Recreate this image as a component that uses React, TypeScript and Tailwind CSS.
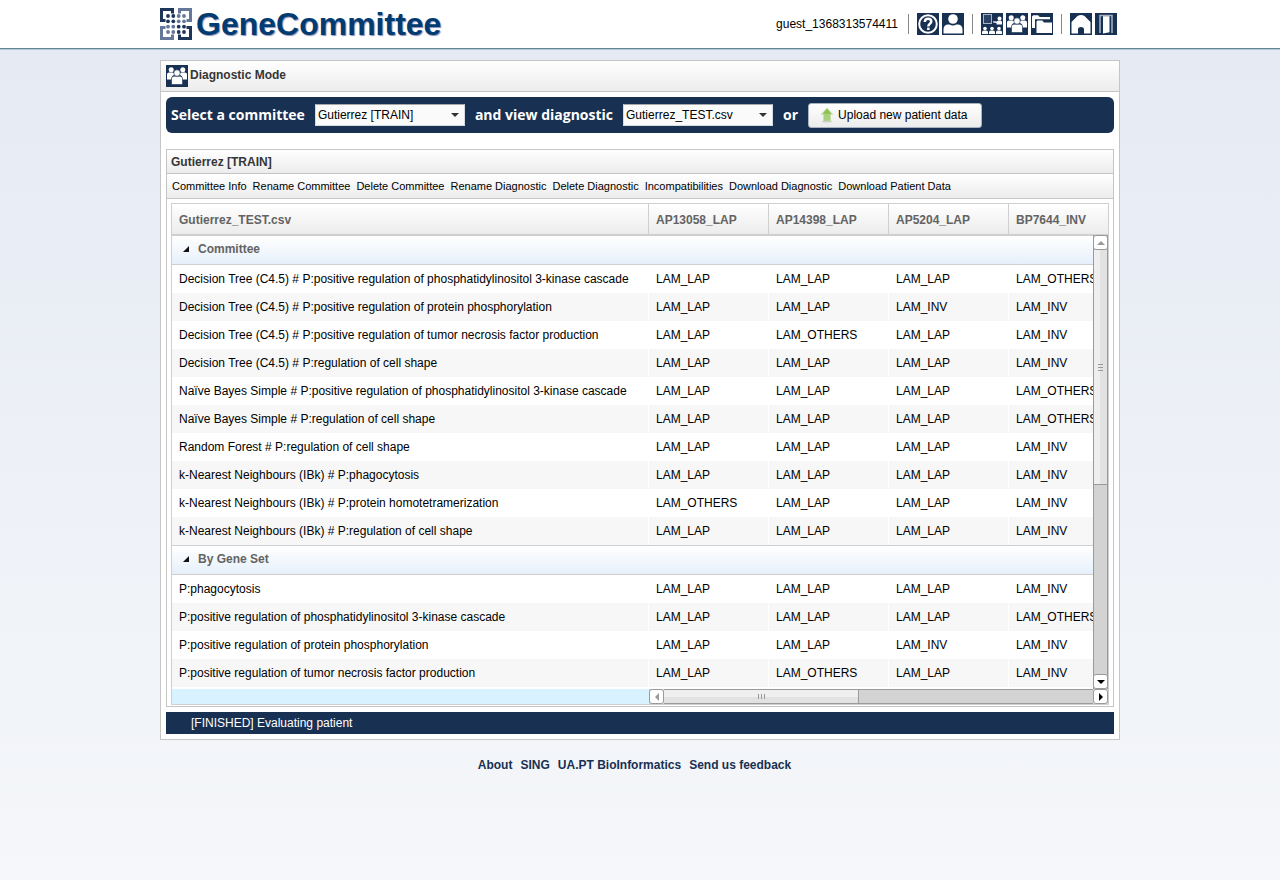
import React, { useState } from "react";

const NAVY = "#183052";

function IconBox({ children }: { children: React.ReactNode }) {
  return (
    <svg viewBox="0 0 22 22" className="block size-[22px]" aria-hidden="true">
      <rect width="22" height="22" fill={NAVY} />
      {children}
    </svg>
  );
}

const HelpIcon = () => (
  <IconBox>
    <circle cx="11" cy="11" r="8.8" fill="none" stroke="#fff" strokeWidth="2" />
    <path d="M7.8 9c0-2.2 1.4-3.2 3.3-3.2s3.200 1.100 3.200 2.700c0 2.300-3 2.300-3 4.900" fill="none" stroke="#fff" strokeWidth="2.400" />
    <rect x="10.100" y="14.600" width="2.500" height="2.400" fill="#fff" />
  </IconBox>
);

const UserIcon = () => (
  <IconBox>
    <circle cx="11" cy="6" r="4.800" fill="#fff" />
    <path d="M1.500 20.500v-4.300c0-3 2-4.700 4.800-4.700h1.200c2 1.300 5 1.300 7 0h1.200c2.800 0 4.800 1.700 4.800 4.700v4.300z" fill="#fff" />
  </IconBox>
);

const ClassIcon = () => (
  <IconBox>
    <rect x="2.500" y="1.500" width="8" height="9" fill="#2b4262" stroke="#aab4c2" />
    <circle cx="18.500" cy="5.500" r="2" fill="#fff" />
    <path d="M21 11.500h-5.500V10l-3.300-.6V8.300l3.800.2 1-.9h2c1.200 0 2 .7 2 1.500z" fill="#fff" />
    {[4, 11, 18].map((x) => (
      <g key={x} fill="#fff">
        <circle cx={x} cy="15.500" r="1.800" />
        <path d={`M${x - 3} 21v-1.600c0-1.300.7-2 1.800-2h2.400c1.100 0 1.800.7 1.800 2V21z`} />
      </g>
    ))}
  </IconBox>
);

const GroupIcon = () => (
  <IconBox>
    <g fill="#fff">
      <circle cx="5.200" cy="4.800" r="2.500" />
      <circle cx="16.800" cy="4.800" r="2.500" />
      <path d="M1 14.500V9.800C1 8.300 1.900 7.600 3 7.600h4l2 1.700-3 2-.5 3.200zM21 14.500V9.800c0-1.500-.9-2.200-2-2.200h-4l-2 1.700 3 2 .5 3.200z" />
      <path d="M5.500 19.500V14c0-1.900 1-2.800 2.700-2.800h5.600c1.700 0 2.700.9 2.700 2.800v5.500z" stroke={NAVY} strokeWidth=".6" />
      <circle cx="11" cy="8" r="3.200" stroke={NAVY} strokeWidth=".6" />
    </g>
  </IconBox>
);

const FolderIcon = () => (
  <IconBox>
    <path d="M1 15V3.500L2.200 2.200h5L8.700 4H19v2.300H4V15z" fill="#fff" />
    <path d="M5.500 8.500 6.500 7.500h4.800L13 9.500h8V20H5.500z" fill="#fff" />
  </IconBox>
);

const HomeIcon = () => (
  <IconBox>
    <path d="M1.500 20.500V9L7.500 3Q11 .8 14.500 3l6 6v11.500H14v-4.300c0-3-6-3-6 0v4.300z" fill="#fff" />
  </IconBox>
);

const ExitIcon = () => (
  <IconBox>
    <path d="M5 20V2.500h12V20" fill="none" stroke="#a4afbf" strokeWidth="1.600" />
    <path d="M8 3.300h6.500v16L8 20.500z" fill="#fff" />
  </IconBox>
);

const DARK = "#1d3558";
const PALE = "#66789a";

const Logo = () => (
  <svg viewBox="0 0 32 32" className="size-8 shrink-0" aria-hidden="true">
    <g fill="none" strokeWidth="3">
      <path d="M12.500 5.500v-4h-11v11h4" stroke={DARK} />
      <path d="M19.500 5.500v-4h11v11h-4" stroke={PALE} />
      <path d="M12.500 26.500v4h-11v-11h4" stroke={PALE} />
      <path d="M19.500 26.500v4h11v-11h-4" stroke={DARK} />
    </g>
    {[8, 13.3, 18.700, 24].map((y, r) =>
      [8, 13.3, 18.700, 24].map((x, c) => (
        <circle key={`${x}-${y}`} cx={x} cy={y} r="1.900" fill={(r < 2) === (c < 2) ? DARK : PALE} />
      )),
    )}
  </svg>
);

const Divider = () => <span className="h-5 w-px bg-[#888888]" />;

function IconLink({ label, children }: { label: string; children: React.ReactNode }) {
  return (
    <a href="#" aria-label={label} className="block">
      {children}
    </a>
  );
}

function Picker({ label, options }: { label: string; options: string[] }) {
  return (
    <label className="flex items-center gap-[10px]">
      <span>{label}</span>
      <span className="relative block">
        <select className="block h-[22px] w-[150px] appearance-none border border-[#d5dbe4] border-t-[#a8a8a8] bg-[#fafafa] px-[2px] font-['Liberation_Sans',sans-serif] text-xs font-normal text-black">
          {options.map((o) => (
            <option key={o}>{o}</option>
          ))}
        </select>
        <svg viewBox="0 0 8 4" className="pointer-events-none absolute top-[9px] right-[6px] h-1 w-2" aria-hidden="true">
          <path d="M0 0h8L4 4z" fill="#333" />
        </svg>
      </span>
    </label>
  );
}

const patients = ["AP13058_LAP", "AP14398_LAP", "AP5204_LAP", "BP7644_INV"];

const L = "LAM_LAP";
const I = "LAM_INV";
const O = "LAM_OTHERS";

const groups = [
  {
    name: "Committee",
    rows: [
      ["Decision Tree (C4.5) # P:positive regulation of phosphatidylinositol 3-kinase cascade", L, L, L, O],
      ["Decision Tree (C4.5) # P:positive regulation of protein phosphorylation", L, L, I, I],
      ["Decision Tree (C4.5) # P:positive regulation of tumor necrosis factor production", L, O, L, I],
      ["Decision Tree (C4.5) # P:regulation of cell shape", L, L, L, I],
      ["Naïve Bayes Simple # P:positive regulation of phosphatidylinositol 3-kinase cascade", L, L, L, O],
      ["Naïve Bayes Simple # P:regulation of cell shape", L, L, L, O],
      ["Random Forest # P:regulation of cell shape", L, L, L, I],
      ["k-Nearest Neighbours (IBk) # P:phagocytosis", L, L, L, I],
      ["k-Nearest Neighbours (IBk) # P:protein homotetramerization", O, L, L, I],
      ["k-Nearest Neighbours (IBk) # P:regulation of cell shape", L, L, L, I],
    ],
  },
  {
    name: "By Gene Set",
    rows: [
      ["P:phagocytosis", L, L, L, I],
      ["P:positive regulation of phosphatidylinositol 3-kinase cascade", L, L, L, O],
      ["P:positive regulation of protein phosphorylation", L, L, I, I],
      ["P:positive regulation of tumor necrosis factor production", L, O, L, I],
    ],
  },
];

function Group({ name, rows, first }: { name: string; rows: string[][]; first: boolean }) {
  const [open, setOpen] = useState(true);
  return (
    <tbody>
      <tr>
        <th
          colSpan={5}
          className={`border-b border-[#cfcfcf] bg-linear-to-b from-white to-[#e6f0fa] px-0 pt-0 pb-[2px] text-left ${first ? "h-[29px]" : "h-[30px] border-t"}`}
        >
          <button
            type="button"
            aria-expanded={open}
            onClick={() => setOpen(!open)}
            className="flex h-6 items-center gap-[9px] pl-[11px] font-bold text-[#636363]"
          >
            <svg viewBox="0 0 6 6" className="size-[6px]" aria-hidden="true">
              <path d="M6 0v6H0z" fill="#111" />
            </svg>
            {name}
          </button>
        </th>
      </tr>
      {open &&
        rows.map((row, i) => (
          <tr key={row[0]} className={i % 2 ? "bg-[#f7f7f7]" : "bg-white"}>
            {row.map((cell, c) => (
              <td key={c} className="h-7 border-r border-white py-0 pr-0 pl-[7px] whitespace-nowrap">
                {cell}
              </td>
            ))}
          </tr>
        ))}
    </tbody>
  );
}

function Arrow({ label, d, muted }: { label: string; d: string; muted?: boolean }) {
  return (
    <button
      type="button"
      aria-label={label}
      className="flex size-[15px] shrink-0 items-center justify-center rounded-[3px] border border-[#9a9a9a] bg-white"
    >
      <svg viewBox="0 0 8 8" className="size-2" aria-hidden="true">
        <path d={d} fill={muted ? "#999" : "#000"} />
      </svg>
    </button>
  );
}

const actions = [
  "Committee Info",
  "Rename Committee",
  "Delete Committee",
  "Rename Diagnostic",
  "Delete Diagnostic",
  "Incompatibilities",
  "Download Diagnostic",
  "Download Patient Data",
];

export default function App() {
  return (
    <div className="min-h-screen bg-linear-to-b from-[#e5e9f3] to-[#f5f7fa] font-['Liberation_Sans',sans-serif] text-xs text-black">
      <header className="border-b border-[#5f8495] bg-white shadow-[0_1px_0_#b4cbd6]">
        <div className="mx-auto flex h-12 max-w-[960px] items-center justify-between pr-[3px]">
          <a href="#" className="flex items-center gap-1 text-[32px] leading-8 font-bold text-[#003b71] [text-shadow:1px_1px_1px_#8f8fb8]">
            <Logo />
            GeneCommittee
          </a>
          <nav className="flex items-center">
            <span>guest_1368313574411</span>
            <div className="flex items-center gap-2 pl-[10px]">
              <Divider />
              <div className="flex gap-[3px]">
                <IconLink label="Help"><HelpIcon /></IconLink>
                <IconLink label="Profile"><UserIcon /></IconLink>
              </div>
              <Divider />
              <div className="flex gap-[3px]">
                <IconLink label="Classifiers"><ClassIcon /></IconLink>
                <IconLink label="Diagnostic"><GroupIcon /></IconLink>
                <IconLink label="Data"><FolderIcon /></IconLink>
              </div>
              <Divider />
              <div className="flex gap-[3px]">
                <IconLink label="Home"><HomeIcon /></IconLink>
                <IconLink label="Log out"><ExitIcon /></IconLink>
              </div>
            </div>
          </nav>
        </div>
      </header>

      <main className="mx-auto mt-[11px] max-w-[960px] border border-[#c5c5c5] bg-white">
        <h1 className="flex h-[31px] items-center gap-[2px] border-b border-[#c5c5c5] bg-linear-to-b from-white to-[#ececec] px-[5px] font-bold text-[#363636]">
          <GroupIcon />
          <span className="pb-[2px]">Diagnostic Mode</span>
        </h1>

        <div className="p-[5px]">
          <form className="flex h-9 items-center gap-[10px] rounded-md bg-[#183052] px-[5px] font-['Open_Sans',sans-serif] text-sm font-bold text-white">
            <Picker label="Select a committee" options={["Gutierrez [TRAIN]"]} />
            <Picker label="and view diagnostic" options={["Gutierrez_TEST.csv"]} />
            <span>or</span>
            <button
              type="button"
              className="flex h-[25px] w-[174px] items-center gap-1 rounded-[3px] border border-[#a9b3c0] bg-linear-to-b from-white to-[#ececec] pl-[11px] font-['Liberation_Sans',sans-serif] text-xs font-normal whitespace-nowrap text-black"
            >
              <svg viewBox="0 0 14 16" className="h-4 w-[14px] shrink-0" aria-hidden="true">
                <ellipse cx="7" cy="14.500" rx="5" ry="1" fill="#cfcfcf" />
                <path d="M7 1 12.800 7.500H10.500V14H3.500V7.500H1.200z" fill="#a9d07c" stroke="#c3dfa8" strokeWidth=".6" />
                <path d="M7 2 11 6.800H3z" fill="#8cc152" />
              </svg>
              Upload new patient data
            </button>
          </form>

          <section className="mt-4 border border-[#c5c5c5]">
            <h2 className="flex h-6 items-center border-b border-[#c5c5c5] bg-linear-to-b from-white to-[#ececec] px-1 font-bold text-[#363636]">
              Gutierrez [TRAIN]
            </h2>
            <div className="flex h-[25px] items-center gap-[6px] border-b border-[#c5c5c5] bg-linear-to-b from-white to-[#ececec] px-[5px] text-[11px]">
              {actions.map((a) => (
                <button key={a} type="button" className="whitespace-nowrap">
                  {a}
                </button>
              ))}
            </div>

            <div className="px-1 pt-1 pb-px">
              <div className="relative border border-[#cfcfcf]">
                <div className="overflow-hidden">
                  <table className="w-full table-fixed border-separate border-spacing-0">
                    <colgroup>
                      <col />
                      <col className="w-[120px]" />
                      <col className="w-[120px]" />
                      <col className="w-[120px]" />
                      <col className="w-[99px]" />
                    </colgroup>
                    <thead>
                      <tr>
                        {["Gutierrez_TEST.csv", ...patients].map((p) => (
                          <th
                            key={p}
                            className="h-8 border-r border-b-2 border-[#cfcfcf] bg-linear-to-b from-white to-[#ececec] pt-[2px] pr-0 pb-0 pl-[7px] text-left font-bold whitespace-nowrap text-[#636363] last:border-r-0"
                          >
                            {p}
                          </th>
                        ))}
                      </tr>
                    </thead>
                    {groups.map((g, i) => (
                      <Group key={g.name} name={g.name} rows={g.rows} first={i === 0} />
                    ))}
                  </table>
                </div>
                <div className="absolute top-[31px] right-0 bottom-[15px] flex w-[15px] flex-col border-x border-[#9a9a9a] bg-[#d3d3d3]">
                  <div className="-mx-px flex flex-1 flex-col">
                    <Arrow label="Scroll up" d="M4 2 8 6H0z" muted />
                    <div className="mx-px flex h-[235px] flex-col items-center justify-center gap-[2px] border-b border-[#9a9a9a] bg-linear-to-r from-[#efefef] from-50% to-[#e2e2e2] to-50%">
                      <span className="h-px w-[5px] bg-[#999999]" />
                      <span className="h-px w-[5px] bg-[#999999]" />
                      <span className="h-px w-[5px] bg-[#999999]" />
                    </div>
                    <span className="flex-1" />
                    <Arrow label="Scroll down" d="M0 2h8L4 6z" />
                  </div>
                </div>
                <div className="mt-[2px] flex h-[15px]">
                  <div className="flex-1 bg-[#d9f2ff]" />
                  <div className="flex w-[459px] bg-[#d3d3d3]">
                    <Arrow label="Scroll left" d="M6 0v8L2 4z" muted />
                    <div className="flex w-[195px] items-center justify-center gap-[2px] border-y border-r border-[#9a9a9a] bg-linear-to-b from-[#efefef] from-50% to-[#e2e2e2] to-50%">
                      <span className="h-[5px] w-px bg-[#999999]" />
                      <span className="h-[5px] w-px bg-[#999999]" />
                      <span className="h-[5px] w-px bg-[#999999]" />
                    </div>
                    <span className="flex-1 border-y border-[#9a9a9a]" />
                    <Arrow label="Scroll right" d="M2 0v8l4-4z" />
                  </div>
                </div>
              </div>
            </div>
          </section>

          <p className="mt-[5px] flex h-[22px] items-center bg-[#183052] pl-[25px] text-white">[FINISHED] Evaluating patient</p>
        </div>
      </main>

      <footer className="mt-[17px] flex justify-center gap-2 pr-[11px] font-bold text-[#183052]">
        <a href="#">About</a>
        <a href="#">SING</a>
        <a href="#">UA.PT BioInformatics</a>
        <a href="#">Send us feedback</a>
      </footer>
    </div>
  );
}
